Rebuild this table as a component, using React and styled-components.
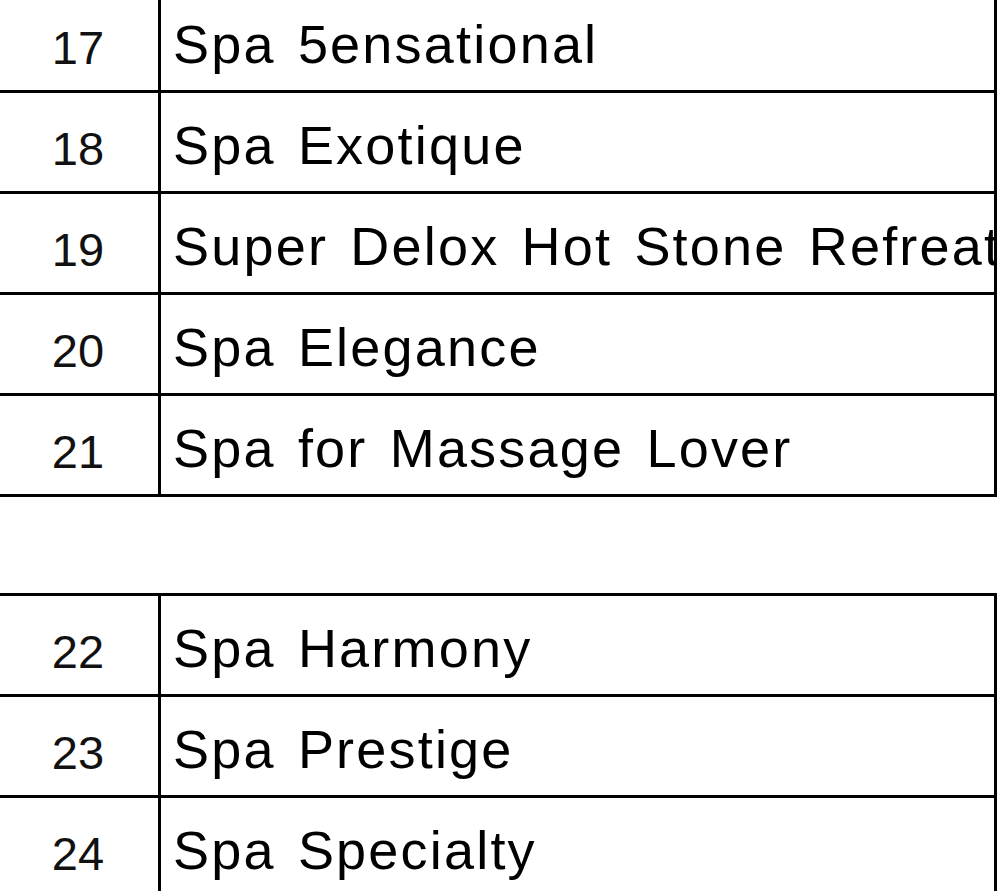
import React from "react";
import styled, { createGlobalStyle } from "styled-components";

const Global = createGlobalStyle`
  html, body {
    margin: 0;
    padding: 0;
    background: #ffffff;
    overflow: hidden;
  }
  * { box-sizing: border-box; }
`;

const Page = styled.div`
  width: 1000px;
  height: 891px;
  overflow: hidden;
  display: flex;
  flex-direction: column;
  gap: 96px;
  background: #fff;
`;

const Table = styled.div`
  width: 1000px;
  margin-left: -3px;
  margin-top: ${(p) => (p.$first ? "-11px" : "0")};
  border: 3px solid #000;
  display: flex;
  flex-direction: column;
  flex-shrink: 0;
`;

const Row = styled.div`
  display: grid;
  grid-template-columns: 161px 1fr;
  height: 98px;
  border-top: ${(p) => (p.$first ? "none" : "3px solid #000")};
  box-sizing: content-box;
`;

const NumCell = styled.div`
  border-right: 3px solid #000;
  display: flex;
  align-items: center;
  justify-content: center;
  padding-top: 12px;
  padding-right: 2px;
  font-family: "Liberation Sans", Arial, sans-serif;
  font-size: 47px;
  color: #111;
`;

const NameCell = styled.div`
  display: flex;
  align-items: center;
  padding-left: 12px;
  padding-top: 6px;
  overflow: hidden;
  white-space: nowrap;
  font-family: "Liberation Sans", Arial, sans-serif;
  font-size: 54px;
  letter-spacing: 2.2px;
  word-spacing: 5px;
  color: #000;
`;

const groups = [
  [
    [17, "Spa 5ensational"],
    [18, "Spa Exotique"],
    [19, "Super Delox Hot Stone Refreat"],
    [20, "Spa Elegance"],
    [21, "Spa for Massage Lover"],
  ],
  [
    [22, "Spa Harmony"],
    [23, "Spa Prestige"],
    [24, "Spa Specialty"],
  ],
];

export default function App() {
  return (
    <>
      <Global />
      <Page>
        {groups.map((rows, gi) => (
          <Table key={gi} $first={gi === 0}>
            {rows.map(([n, name], ri) => (
              <Row key={n} $first={ri === 0}>
                <NumCell>{n}</NumCell>
                <NameCell>{name}</NameCell>
              </Row>
            ))}
          </Table>
        ))}
      </Page>
    </>
  );
}
